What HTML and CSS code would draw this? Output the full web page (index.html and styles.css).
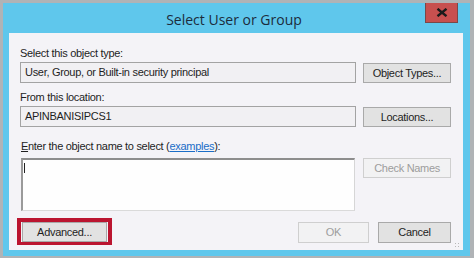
FILE: index.html
```html
<!DOCTYPE html>
<html>
<head>
<meta charset="utf-8">
<link rel="stylesheet" href="styles.css">
</head>
<body>
<div class="window">
  <div class="titlebar">
    <span></span>
    <div class="title">Select User or Group</div>
    <div class="close"><svg width="12" height="9" viewBox="0 0 12 9"><path d="M1.5 0.8 L10.5 8.2 M10.5 0.8 L1.5 8.2" stroke="#1b1b1b" stroke-width="2.4"/></svg></div>
  </div>
  <div class="client">
    <div class="label l1">Select this object type:</div>
    <div class="row">
      <div class="field">User, Group, or Built-in security principal</div>
      <div class="btn">Object Types...</div>
    </div>
    <div class="label l2">From this location:</div>
    <div class="row">
      <div class="field">APINBANISIPCS1</div>
      <div class="btn">Locations...</div>
    </div>
    <div class="label l3"><u>E</u>nter the object name to select (<a class="link">examples</a>):</div>
    <div class="row top">
      <div class="textarea"><span class="caret"></span></div>
      <div class="btn disabled">Check Names</div>
    </div>
    <div class="bottom">
      <div class="highlight"><div class="btn adv">Advanced...</div></div>
      <div class="right">
        <div class="btn ok disabled">OK</div>
        <div class="btn cancel">Cancel</div>
      </div>
    </div>
    <div class="grip"></div>
  </div>
</div>
</body>
</html>
```
FILE: styles.css
```css
html, body { margin: 0; padding: 0; }
body { width: 474px; height: 258px; overflow: hidden; background: #b4b4b4; }
.window {
  box-sizing: border-box;
  width: 474px; height: 258px;
  border-style: solid; border-color: #b0b3b6;
  border-width: 3px 4px 2px 3px;
  background: #5fc7ec;
  padding: 0 7px 6px 6px;
  display: flex; flex-direction: column;
}
.titlebar {
  height: 30px;
  display: grid; grid-template-columns: 1fr auto 1fr;
  align-items: start;
  margin: 0 -1px 0 -6px;
}
.title {
  font-family: "Open Sans", "Noto Sans", sans-serif;
  font-size: 14px; color: #1c2c3c;
  padding-top: 7px; line-height: 20px;
  padding-left: 1px;
}
.close {
  justify-self: end;
  width: 31px; height: 19px;
  margin-right: 6px;
  background: #c7504f;
  border: 1px solid #7a4848;
  border-top: none;
  display: flex; align-items: center; justify-content: center;
}
.client {
  position: relative;
  flex: 1;
  background: #f4f3f7;
  padding: 0 12px 0 11px;
  font-family: "Liberation Sans", Arial, sans-serif;
  font-size: 11px; color: #1e1e1e;
  letter-spacing: -0.3px;
  display: flex; flex-direction: column;
}
.label { line-height: 14px; height: 14px; }
.l1 { margin-top: 13px; margin-bottom: 2px; }
.l2 { margin-top: 7px; margin-bottom: 2px; }
.l3 { margin-top: 12px; margin-bottom: 5px; padding-left: 1px; }
.link { color: #1a6dc7; text-decoration: underline; }
.row { display: flex; align-items: center; gap: 7px; }
.row.top { align-items: flex-start; }
.field {
  box-sizing: border-box;
  width: 336px; height: 21px;
  border: 1px solid #a3a3a3;
  background: #f1f0f3;
  padding-left: 4px;
  line-height: 19px;
}
.btn {
  box-sizing: border-box;
  width: 88px; height: 20px;
  border: 1px solid #a9a9a9;
  background: #e2e2e2;
  text-align: center; line-height: 18px;
  color: #1e1e1e;
}
.btn.disabled { background: #f2f2f3; border-color: #cfcfcf; color: #9d9d9d; }
.textarea {
  box-sizing: border-box;
  width: 335px; height: 53px;
  margin-left: 1px;
  background: #fefefe;
  border-style: solid;
  border-width: 2px 1px 1px 2px;
  border-color: #8d8d8d #d6d6d6 #dadada #9a9a9a;
  padding: 3px 0 0 1px;
  margin-right: 1px;
}
.caret { display: block; width: 1px; height: 10px; background: #222; }
.bottom {
  margin-top: 7px;
  display: flex; justify-content: space-between; align-items: flex-start;
}
.highlight {
  margin-left: -3px;
  border: 4px solid #bb1530;
  border-bottom-width: 3px;
  padding: 0 1px;
}
.btn.adv { width: 85px; }
.right { display: flex; gap: 9px; padding-top: 4px; }
.btn.ok { width: 71px; height: 21px; line-height: 19px; }
.btn.cancel { width: 73px; height: 21px; line-height: 19px; }
.grip {
  position: absolute; right: 2px; bottom: 1px;
  width: 7px; height: 7px;
  background-image: radial-gradient(circle, #b8b8b8 0.8px, transparent 1px);
  background-size: 3px 3px;
}
```
